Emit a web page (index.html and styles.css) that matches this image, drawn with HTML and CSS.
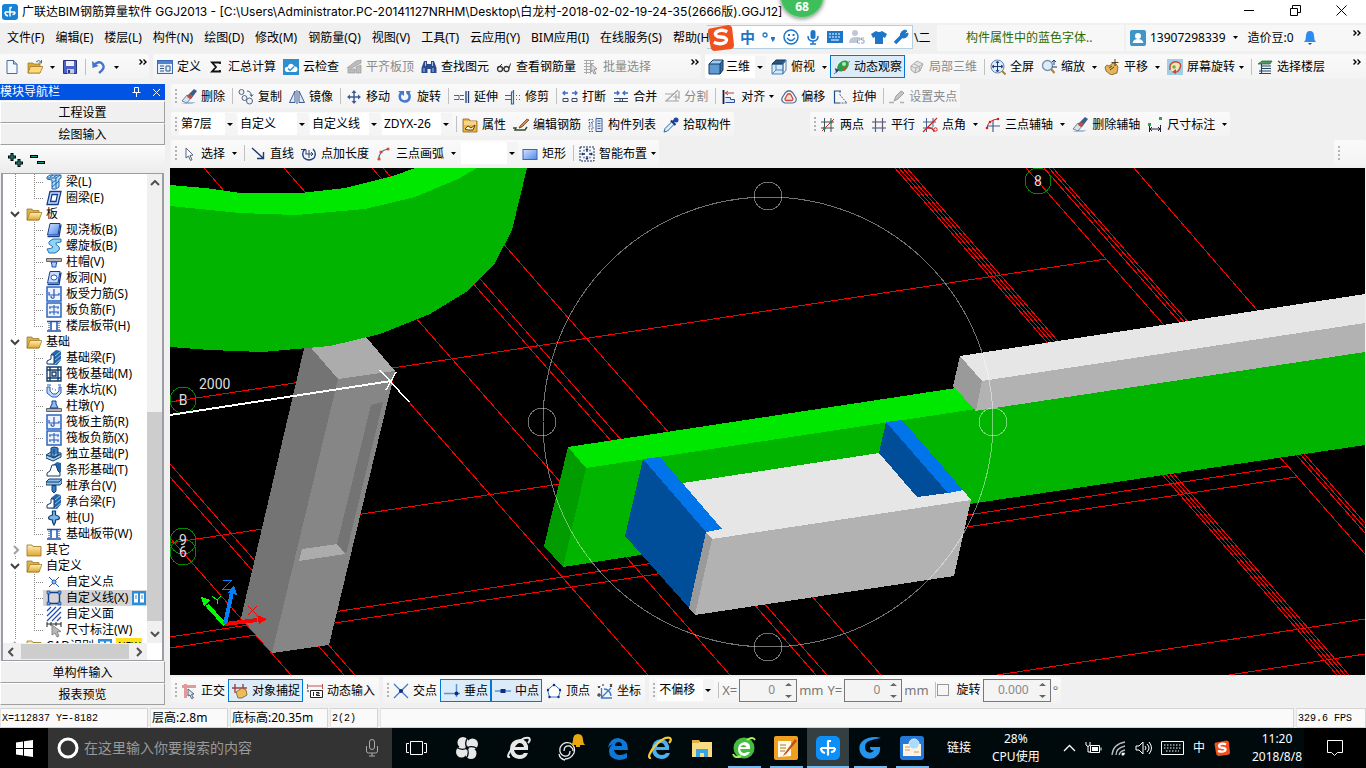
FILE: index.html
```
<!DOCTYPE html>
<html lang="zh-CN">
<head>
  <meta charset="UTF-8" />
  <meta name="viewport" content="width=device-width, initial-scale=1.0" />
  <title>广联达BIM钢筋算量软件 GGJ2013</title>
  <link rel="stylesheet" href="styles.css">
</head>
<body>
  <!-- Icon sprite -->
  <svg class="sprite" aria-hidden="true">
    <linearGradient id="g-blue" x1="0" y1="0" x2="1" y2="1"><stop offset="0" stop-color="#d4e4ff"/><stop offset="1" stop-color="#4f86e8"/></linearGradient>
    <linearGradient id="g-fold" x1="0" y1="0" x2="0" y2="1"><stop offset="0" stop-color="#fff0b8"/><stop offset="1" stop-color="#e0a52c"/></linearGradient>
    <symbol id="i-logo" viewBox="0 0 16 16"><rect width="16" height="16" rx="3" fill="#1583d6"/><path d="M8 3v9.500M8 3.500h2M3 8h10M3 8q0 3.500 3 4M13 8q0 2.500-2.500 2.500" fill="none" stroke="#fff" stroke-width="1.500"/></symbol>
    <symbol id="i-arrow" viewBox="0 0 5 3"><path d="M0 0h5L2.500 3z" fill="#000"/></symbol>
    <symbol id="i-more" viewBox="0 0 8 6"><path d="M.5.5L3 3 .5 5.500M4.500.5L7 3 4.500 5.500" fill="none" stroke="#000" stroke-width="1.400"/></symbol>
    <symbol id="i-new" viewBox="0 0 16 16"><path d="M3 1.500h6.500L13 5v9.500H3z" fill="#f4f8ff" stroke="#4a6a9a"/><path d="M9.500 1.500V5H13" fill="#b8cce8" stroke="#4a6a9a"/></symbol>
    <symbol id="i-open" viewBox="0 0 16 16"><path d="M1 4h5l1 1h6v9H1z" fill="#dca83c" stroke="#98701c" stroke-width=".7"/><path d="M3.500 7.500H16L13 14H1z" fill="#ffd97a" stroke="#98701c" stroke-width=".7"/><path d="M9 3q3-3 5 0M14.500 1v3h-3" fill="none" stroke="#4a6a88"/></symbol>
    <symbol id="i-save" viewBox="0 0 16 16"><path d="M1.500 1.500h13v13h-13z" fill="#4c63c8" stroke="#26327e"/><path d="M4 2h8v5H4z" fill="#eef"/><path d="M5 10h7v4.500H5z" fill="#c8cce0"/><path d="M6 11h2v3H6z" fill="#26327e"/></symbol>
    <symbol id="i-undo" viewBox="0 0 16 16"><path d="M3 6q5-5 8.500-1T8 14" fill="none" stroke="#4674cc" stroke-width="2.400"/><path d="M1 2l.500 7 6-2z" fill="#4674cc"/></symbol>
    <symbol id="i-define" viewBox="0 0 16 16"><rect x=".5" y="1.500" width="15" height="13" fill="#e4efff" stroke="#3b68b4"/><path d="M1 2h14v3H1z" fill="#4f83cc"/><path d="M3 7h4M3 9.500h4M3 12h4M9 7h4v5H9z" fill="none" stroke="#35547f"/></symbol>
    <symbol id="i-sigma" viewBox="0 0 16 16"><path d="M12 5V3.500H4L8 8l-4 4.500h8V11" fill="none" stroke="#111" stroke-width="1.800"/></symbol>
    <symbol id="i-cloud" viewBox="0 0 16 16"><rect width="16" height="16" fill="#2c8fd0"/><path d="M4 13q-3-1-2-4 1-1.500 2.500-1Q6 4 9 5q2 .5 2 2.500 3-.5 3.500 2T12.500 13z" fill="#fff"/><path d="M5 9.500l2 2 4-4" fill="none" stroke="#2c8fd0" stroke-width="1.300"/></symbol>
    <symbol id="i-align-top" viewBox="0 0 16 16"><path d="M1 9l9-7 5-1v3L6 9zM2 10h7v4H2zM10 8l5-2v8h-5z" fill="#bcbcbc" stroke="#9a9a9a" stroke-width=".7"/></symbol>
    <symbol id="i-binoc" viewBox="0 0 16 16"><path d="M3 2h3v3h4V2h3l2.500 7v5H9.500v-4h-3v4H.5V9z" fill="#2d4a8c"/><path d="M3 9v4M12 9v4M4.500 3v4M11.500 3v4" stroke="#a8c4f4"/></symbol>
    <symbol id="i-glasses" viewBox="0 0 16 16"><circle cx="4" cy="10" r="2.500" fill="none" stroke="#333" stroke-width="1.300"/><circle cx="10.500" cy="10" r="2.500" fill="none" stroke="#333" stroke-width="1.300"/><path d="M6.500 9.500h1.500M2 9l4-4M13 9.500l1.500-5" stroke="#333" fill="none"/></symbol>
    <symbol id="i-batch" viewBox="0 0 16 16"><path d="M1 1.500h10M1 4.500h10M1 7.500h8M1 10.500h6M1 13.500h6M3.500 1v14M7.500 1v14" stroke="#aaa" fill="none"/><path d="M8 5l6 5-3 .5 2 4-2 .5-1.500-4L8 13z" fill="#ddd" stroke="#999"/></symbol>
    <symbol id="i-cube" viewBox="0 0 16 16"><path d="M1 5l4-4h10l-3 4z" fill="#a6cdf0"/><path d="M1 5h11v10H1z" fill="#5f9bd2"/><path d="M12 5l3-4v10l-3 4z" fill="#356fa8"/><path d="M1 5l4-4h10v10l-3 4H1zM1 5h11v10M12 5l3-4" fill="none" stroke="#173a60"/></symbol>
    <symbol id="i-topview" viewBox="0 0 16 16"><path d="M1 5h11v10H1z" fill="#d4e9fb" stroke="#4f83b4"/><path d="M1 5l4-4h10l-3 4z" fill="#2d5680" stroke="#173a60"/><path d="M12 5l3-4v10l-3 4zM5 6v5l-4 4M5 11h7" fill="none" stroke="#4f83b4"/></symbol>
    <symbol id="i-orbit" viewBox="0 0 16 16"><path d="M0 15L16 2" stroke="#777"/><ellipse cx="9" cy="7" rx="6.500" ry="4.500" transform="rotate(-40 9 7)" fill="#2d9c48"/><circle cx="10" cy="5" r="2" fill="#a4f0a8"/><path d="M1 9l4 2-3 3z" fill="#283c80"/><path d="M8 11l5-4-2 5z" fill="#d04830"/></symbol>
    <symbol id="i-part3d" viewBox="0 0 16 16"><path d="M2 7l6-5 6 3-3 7-5 2-4-3zM2 7l5 2 7-4M7 9l-1 5M5 5l6 3-1 4" fill="#e2e2e2" stroke="#aaa"/></symbol>
    <symbol id="i-full" viewBox="0 0 16 16"><circle cx="7.500" cy="7.500" r="6.500" fill="#e0edfa" stroke="#6484ac"/><path d="M7.500 2.500v10M2.500 7.500h10M6 4l1.500-2L9 4M6 11l1.500 2L9 11M4 6L2 7.500 4 9M11 6l2 1.500L11 9" fill="none" stroke="#1c3c74"/><path d="M12 12l3.500 3.500" stroke="#b08030" stroke-width="2"/></symbol>
    <symbol id="i-zoom" viewBox="0 0 16 16"><circle cx="6.500" cy="6.500" r="5" fill="#dcecfa" stroke="#7890ac" stroke-width="1.300"/><path d="M10 10l3.500 4" stroke="#b08030" stroke-width="2"/><path d="M13 1v5M11 3l2-2 2 2M11 8h5" fill="none" stroke="#1c3c74"/></symbol>
    <symbol id="i-pan" viewBox="0 0 16 16"><path d="M1 8l2-2 2 1 4-3 3 1 2 3-1 6-6 2-5-4z" fill="#e4b458" stroke="#7a5820" stroke-width=".8"/><path d="M11 0v7M7.500 3.500h7M5 9l3-2M6 11l4-3" stroke="#54431c"/></symbol>
    <symbol id="i-rotscr" viewBox="0 0 16 16"><rect width="16" height="16" fill="#9cd0e8"/><path d="M3 11V7q2-5 7-4t3 6-6 4" fill="#f0e8bc" stroke="#d04438" stroke-width="1.500"/><path d="M5 13l4-3v5z" fill="#d04438"/><circle cx="7" cy="8" r="1.800" fill="#70b040"/></symbol>
    <symbol id="i-floors" viewBox="0 0 16 16"><path d="M1 5l4-3h10l-2 3z" fill="#4c9c60" stroke="#205830" stroke-width=".7"/><path d="M4 7h10M4 9.500h10M2 12h12M2 14.500h12M4.500 5v10" stroke="#24486c" stroke-width="1.200"/></symbol>
    <symbol id="i-erase" viewBox="0 0 16 16"><path d="M0 14.500h11l4-1H7z" fill="#5a8cc4"/><path d="M1 12l5-6 4 3-4 5z" fill="#d8e4f0" stroke="#506c90" stroke-width=".8"/><path d="M6 7l7-7 3 2-6 8z" fill="#3c5c8c"/><path d="M6 8l3-3 3 2-3 3z" fill="#c84c3c"/></symbol>
    <symbol id="i-copy" viewBox="0 0 16 16"><g fill="#eef2f8" stroke="#54647c"><circle cx="3.500" cy="3" r="2.500"/><circle cx="6.500" cy="9" r="2.500"/><circle cx="11.500" cy="12" r="3"/></g><path d="M9 2q4 0 4.500 5M12 5.500l1.500 2 1.500-2" fill="none" stroke="#345c90"/></symbol>
    <symbol id="i-mirror" viewBox="0 0 16 16"><path d="M6 2v11.500H.5zM10 2v11.500h5.500z" fill="#dfe8f8" stroke="#3a5a90"/><path d="M8 1v14" stroke="#3a5a90"/></symbol>
    <symbol id="i-move" viewBox="0 0 16 16"><path d="M8 2v12M2 8h12" stroke="#3c5c94" stroke-width="1.500"/><path d="M5.500 4L8 1l2.500 3zM5.500 12L8 15l2.500-3zM4 5.500L1 8l3 2.500zM12 5.500L15 8l-3 2.500z" fill="#3c5c94"/></symbol>
    <symbol id="i-rotate" viewBox="0 0 16 16"><path d="M4 4q-2.500 4 0 7 4 3 7.500 0 2.500-4-.5-7.500" fill="none" stroke="#4478cc" stroke-width="2.500"/><path d="M1 2h6v5zM9 2h5l-4 4z" fill="#4478cc"/></symbol>
    <symbol id="i-extend" viewBox="0 0 16 16"><path d="M0 6.500h5v4H0M6 6.500h4M6 10.500h4" fill="none" stroke="#44649c"/><path d="M12 2v12M14.500 2v12" stroke="#1c3c74" stroke-width="1.300"/></symbol>
    <symbol id="i-trim" viewBox="0 0 16 16"><path d="M0 6.500h6M0 10.500h6M11 6.500h1M14 6.500h1M11 10.500h1M14 10.500h1M6.500 3h2v12h-2zM8.500 1v14" fill="none" stroke="#34689c" stroke-width="1.200"/></symbol>
    <symbol id="i-break" viewBox="0 0 16 16"><path d="M1 4h5M10 4h5M3 2L1 4l2 2M13 2l2 2-2 2" fill="none" stroke="#3c6cc4" stroke-width="1.300"/><path d="M1 9.500h5v3H1zM10 9.500h5v3h-5z" fill="none" stroke="#34486c"/></symbol>
    <symbol id="i-merge" viewBox="0 0 16 16"><path d="M1 4h5M10 4h5M4 2l2 2-2 2M12 2l-2 2 2 2" fill="none" stroke="#3c6cc4" stroke-width="1.300"/><path d="M1 9.500h14M1 12.500h14M7 9.500v3M9.500 9.500v3" fill="none" stroke="#34486c"/></symbol>
    <symbol id="i-split" viewBox="0 0 16 16"><path d="M1 5h8M1 12h14M2 12l12-11M9 8h6M12 5v7M15 2v8" stroke="#a4a4a4" stroke-width="1.200" fill="none"/></symbol>
    <symbol id="i-align" viewBox="0 0 16 16"><path d="M2.500 1v14" stroke="#101c4c" stroke-width="1.800"/><path d="M4 4h9M7 2L4.500 4 7 6" stroke="#c03c2c" fill="none"/><path d="M4.500 8.500h5v2h4v3h-9" fill="#dce8fa" stroke="#2c4ca0"/></symbol>
    <symbol id="i-offset" viewBox="0 0 16 16"><path d="M4.500 3.500Q8 0 11.500 3.500L15 9q1 4-3 5H4Q0 13 1 9z" fill="none" stroke="#546c9c" stroke-width="1.200"/><path d="M6 6q2-2.500 4 0l2 4q0 1.500-1.500 1.500h-5Q4 11.500 4 10z" fill="#f4dcd8" stroke="#c84c3c" stroke-width="1.300"/></symbol>
    <symbol id="i-stretch" viewBox="0 0 16 16"><path d="M9 2H2.500v12H8" fill="none" stroke="#1c4c84" stroke-width="1.200"/><path d="M8 2v4l7 8H8" stroke="#44648c" stroke-dasharray="2 1" fill="none"/></symbol>
    <symbol id="i-grip" viewBox="0 0 16 16"><path d="M0 13.500h5M11 13.500h4" stroke="#b0b0b0" stroke-width="1.500"/><path d="M5 12l2-5 5-5 3 2-6 6z" fill="#c4c4c4" stroke="#a0a0a0"/></symbol>
    <symbol id="i-prop" viewBox="0 0 16 16"><path d="M1 2h6l1 2h7v11H1z" fill="#f0b440" stroke="#8c6420" stroke-width=".8"/><path d="M2 5h12M2 7h12" stroke="#fff4cc"/><path d="M3 12l3-3 3 2 4-3-2 5H6z" fill="#fffae8" stroke="#5c4010"/></symbol>
    <symbol id="i-rebar" viewBox="0 0 16 16"><path d="M0 11h3l-1 2h10l2-3" fill="none" stroke="#34482c" stroke-width="1.400"/><path d="M7 9l7-7 2 1-7 7-3 1z" fill="#d08c4c" stroke="#54341c" stroke-width=".7"/></symbol>
    <symbol id="i-list" viewBox="0 0 16 16"><path d="M1 2.500h4v3H1zM1 9h4v3H1zM1 14.500h4M1 7h4" fill="none" stroke="#44608c" stroke-dasharray="1.500 1"/><path d="M8 1.500h6v13H8z" fill="#dfe9fa" stroke="#3c5c90"/><path d="M9.500 4h3M9.500 6.500h3M9.500 9h3M9.500 11.500h3" stroke="#3c5c90"/></symbol>
    <symbol id="i-pick" viewBox="0 0 16 16"><path d="M1 15l1-3.500L9 4.500 11.500 7l-7 7z" fill="#dcecfc" stroke="#34689c"/><path d="M8 3.500L12.500 8M9.500 5.500L12 3" stroke="#1c3c84" stroke-width="2.200"/><circle cx="13" cy="3" r="2.500" fill="#1c48a4"/></symbol>
    <symbol id="i-two" viewBox="0 0 16 16"><path d="M1 5h13M1 11h13M4.500 1v14M11 1v14" stroke="#44505c"/><path d="M2 14L14 2" stroke="#c03030"/><circle cx="4.500" cy="11" r="1.500" fill="#28883c"/><circle cx="11" cy="5" r="1.500" fill="#28883c"/></symbol>
    <symbol id="i-para" viewBox="0 0 16 16"><path d="M1 5h14M1 11h14" stroke="#34507c" stroke-width="1.200"/><path d="M4.500 1v14M11.500 1v14" stroke="#6c5474" stroke-width="1.200"/></symbol>
    <symbol id="i-angle" viewBox="0 0 16 16"><path d="M1 5h13M1 11h10M4.500 1v14M11 1v9" stroke="#44608c"/><path d="M1 15L15 1M5 11q6-1 7 4" stroke="#d02020" fill="none" stroke-width="1.200"/><circle cx="13.500" cy="12.500" r="1.700" fill="none" stroke="#d02020"/></symbol>
    <symbol id="i-3axis" viewBox="0 0 16 16"><path d="M2 9h13M8 3v12" stroke="#44608c" stroke-width="1.200"/><path d="M2 12Q2 3 13 2" stroke="#d02020" fill="none"/><circle cx="2" cy="11" r="1.300" fill="#d02020"/><circle cx="5" cy="5" r="1.300" fill="#d02020"/><circle cx="13" cy="2" r="1.300" fill="#d02020"/></symbol>
    <symbol id="i-dim" viewBox="0 0 16 16"><path d="M2.500 8v7M13.500 8v7M3 12h10M5 10l-2 2 2 2M11 10l2 2-2 2" fill="none" stroke="#223"/><path d="M1 6h3v3H1zM12 0h3v3h-3z" fill="#2ca44c"/></symbol>
    <symbol id="i-cursor" viewBox="0 0 16 16"><path d="M5 2v10l2.500-2 2 4.500 1.500-.7-2-4.300 3-.500z" fill="#fff" stroke="#54647c"/></symbol>
    <symbol id="i-line" viewBox="0 0 16 16"><path d="M2 2l11 10M13.500 6v6.500H7" fill="none" stroke="#1c3c70" stroke-width="1.400"/></symbol>
    <symbol id="i-ptlen" viewBox="0 0 16 16"><path d="M4 3q-4 4-1 9 5 4 10 0 3-5-1-9" fill="none" stroke="#24447c" stroke-width="1.400"/><path d="M0 3.500h5V8M8 4v8M4.500 8h7M10 6l2 2-2 2" fill="none" stroke="#24447c"/></symbol>
    <symbol id="i-arc" viewBox="0 0 16 16"><path d="M3 14Q2 5 12 3" fill="none" stroke="#44608c" stroke-width="1.200"/><g fill="#d84c2c"><circle cx="3" cy="13" r="1.600"/><circle cx="5" cy="6" r="1.600"/><circle cx="12" cy="3" r="1.600"/></g></symbol>
    <symbol id="i-rect" viewBox="0 0 16 16"><rect x="1" y="3.500" width="14" height="10" fill="url(#g-blue)" stroke="#3c64b8"/></symbol>
    <symbol id="i-smart" viewBox="0 0 16 16"><rect x="1" y="1" width="14" height="14" fill="#f2f6ff" stroke="#1c2c54" stroke-dasharray="2 1"/><path d="M8 3v3M8 10v3M3 8h3M10 8h3M4.500 4.500h1M10.500 4.500h1M4.500 11.500h1M10.500 11.500h1M7 4l1-1 1 1M7 12l1 1 1-1M4 7L3 8l1 1M12 7l1 1-1 1" fill="none" stroke="#1c2c54" stroke-width="1.300"/></symbol>
    <symbol id="i-ortho" viewBox="0 0 16 16"><path d="M1 3.500h14M4.500 1v14" stroke="#e09a9a" stroke-width="3"/><path d="M7 6l6 5-2.500.5 2 3.500-2 .5-1.500-3.500L7 13z" fill="#dbe6f4" stroke="#54647c"/></symbol>
    <symbol id="i-snap" viewBox="0 0 16 16"><path d="M3 1v9M11 1v5M0 5h15" stroke="#a04040" stroke-width="1.400"/><path d="M4 9l6-4 4 2 1 5-5 3H6z" fill="#ecbc5c" stroke="#7c5820" stroke-width=".8"/></symbol>
    <symbol id="i-dyn" viewBox="0 0 16 16"><path d="M.5 1v5M15.500 1v5M1 3h14" stroke="#c05050" fill="none"/><path d="M3.500 7.500h12v7h-12z" fill="#fff" stroke="#222"/><path d="M6.500 9v4M9 9.500h3v1.500H9.500v1.500H13M0 8h2" fill="none" stroke="#222"/></symbol>
    <symbol id="i-cross" viewBox="0 0 16 16"><path d="M1 1l14 14M15 1L1 15" stroke="#3a78c8" stroke-width="1.200"/><circle cx="8" cy="8" r="2" fill="#102c80"/></symbol>
    <symbol id="i-perp" viewBox="0 0 16 16"><path d="M0 10.500h16M12.500 1v13" stroke="#5a94d8" stroke-width="1.500"/><circle cx="12.500" cy="10.500" r="2" fill="#102c80"/></symbol>
    <symbol id="i-mid" viewBox="0 0 16 16"><path d="M0 8h16" stroke="#5a94d8" stroke-width="1.500"/><path d="M5.500 6h5v4h-5z" fill="#102c80"/></symbol>
    <symbol id="i-vertex" viewBox="0 0 16 16"><path d="M8 1.500L14.500 7l-2 7h-9l-2-7z" fill="#fff" stroke="#3a78c8"/><g fill="#102c80"><circle cx="8" cy="2" r="1.200"/><circle cx="14" cy="7" r="1.200"/><circle cx="12.500" cy="14" r="1.200"/><circle cx="3.500" cy="14" r="1.200"/><circle cx="2" cy="7" r="1.200"/></g></symbol>
    <symbol id="i-coord" viewBox="0 0 16 16"><path d="M4.500 5v10H15M5 14l9-9M7 6q6 0 7 7" fill="none" stroke="#3a78c8" stroke-width="1.300"/><path d="M1 3l1 2 1-2M13 1l2 3M15 1l-2 3M5 2h2M1 11h2v2H1z" fill="none" stroke="#222"/></symbol>
    <symbol id="i-user" viewBox="0 0 16 16"><rect width="16" height="16" rx="2" fill="#3f94c8"/><circle cx="8" cy="6" r="3" fill="#fff"/><path d="M2.500 13q1-4 5.500-4t5.500 4z" fill="#fff"/></symbol>
    <symbol id="i-bell" viewBox="0 0 12 16"><path d="M6 1q4 0 4 5 0 4 2 6H0q2-2 2-6 0-5 4-5z" fill="#2c8cf0"/><path d="M4 13h4l-2 2z" fill="#174c94"/></symbol>
    <!-- tree icons -->
    <symbol id="t-open" viewBox="0 0 16 16"><path d="M1 3h5l1 1.500h6V14H1z" fill="#e0b048" stroke="#94701c" stroke-width=".7"/><path d="M4 6.500h12L13 14H1z" fill="url(#g-fold)" stroke="#94701c" stroke-width=".7"/></symbol>
    <symbol id="t-closed" viewBox="0 0 16 16"><path d="M1 3h5l1 1.500h8V14H1z" fill="url(#g-fold)" stroke="#94701c" stroke-width=".8"/></symbol>
    <symbol id="t-beam" viewBox="0 0 16 16"><path d="M1 3l3-2h11v3l-2 1v8l-3 2H6V6L1 5z" fill="#b8e0fa" stroke="#1c60a8"/><path d="M2 4h8l4-3M10 4v10M6 9l4-3M6 13l7-6M4 3l3-2M8 3l3-2" stroke="#1c60a8" fill="none"/></symbol>
    <symbol id="t-ring" viewBox="0 0 16 16"><path d="M4 1.500h11l-3 13H1z" fill="#cce0ff" stroke="#143c8c" stroke-width="1.300"/><path d="M6 4.500h5.500L10 11.500H4.500z" fill="#fff" stroke="#143c8c" stroke-width="1.300"/></symbol>
    <symbol id="t-slab" viewBox="0 0 16 16"><path d="M4 1.500h10l-2 11.500H1.500z" fill="url(#g-blue)" stroke="#143c8c"/><path d="M1.500 14.500H13l2-12" fill="none" stroke="#143c8c" stroke-width="1.400"/></symbol>
    <symbol id="t-spiral" viewBox="0 0 16 16"><path d="M15 1H7Q-1 5 6 8q3 2-5 3l2 4h6q8-4 2-8-4-2 4-3z" fill="#90d4f4" stroke="#2470b4"/></symbol>
    <symbol id="t-cap" viewBox="0 0 16 16"><path d="M.5 4.500h15v3H.5z" fill="#b4b4b4" stroke="#666"/><path d="M5 8h6l-1 3v2H6v-2z" fill="#a8d0ff" stroke="#1c4cb0"/></symbol>
    <symbol id="t-hole" viewBox="0 0 16 16"><path d="M4 1.500h10l-2 11.500H1.500z" fill="#c4dcff" stroke="#143c8c"/><path d="M1.500 14.500H13l2-12" fill="none" stroke="#143c8c" stroke-width="1.400"/><ellipse cx="8" cy="7.500" rx="3" ry="2.500" fill="#fff" stroke="#2458b8"/></symbol>
    <symbol id="t-force" viewBox="0 0 16 16"><path d="M1 1h14v14H1z" fill="#ecf3ff" stroke="#2c64c0" stroke-width="1.500"/><path d="M8 3v9M3 6v3h10V7M5 10q0 3 3 2" fill="none" stroke="#2458b8" stroke-width="1.200"/></symbol>
    <symbol id="t-neg" viewBox="0 0 16 16"><path d="M1 1h14v14H1z" fill="#ecf3ff" stroke="#2c64c0" stroke-width="1.500"/><path d="M8 3v10M3 5h10M3 10h10M4 5v2M12 5v2M4 10v2M12 10v2" fill="none" stroke="#2458b8"/></symbol>
    <symbol id="t-band" viewBox="0 0 16 16"><path d="M1 3.500h14M1 13h14M5 4v8M11 4v8" stroke="#1c50a8" stroke-width="1.500"/><path d="M3 5v7M13 5v7" stroke="#333" stroke-dasharray="1 1"/></symbol>
    <symbol id="t-fbeam" viewBox="0 0 16 16"><path d="M1 14v-3l4-2V4l5-4 5 1v9l-4 5z" fill="#2464a8"/><path d="M1 14v-3l4-2V5h3v9z" fill="#fff" stroke="#143c6c"/><path d="M9 6l6-5M9 10l6-5M9 14l6-5" stroke="#8cc4f0"/></symbol>
    <symbol id="t-raft" viewBox="0 0 16 16"><path d="M1 1h14v14H1zM1 4h14M1 12h14M4 1v14M12 1v14M6 6h4v4H6z" fill="none" stroke="#143c6c" stroke-width="1.400"/></symbol>
    <symbol id="t-pit" viewBox="0 0 16 16"><path d="M1 5h3v4l3 3h3l3-3V5h2v6l-4 4H6L1 11z" fill="#c0dcff" stroke="#2458b8"/><path d="M1 3h4M12 3h3M6 7h1M9 8h1" stroke="#2458b8"/></symbol>
    <symbol id="t-pier" viewBox="0 0 16 16"><path d="M.5 10.500h15v3H.5z" fill="#b4b4b4" stroke="#666"/><path d="M6 3h4v3l2 4H4l2-4z" fill="#8cbcf4" stroke="#143c8c"/></symbol>
    <symbol id="t-pad" viewBox="0 0 16 16"><path d="M0 9l5-3 10 1v4l-8 4-7-3z" fill="#a8d4f4" stroke="#143c6c"/><path d="M5 2l3-1 4 1v7l-4 2-3-2zM8 3v7M0 9l8 3 7-4" fill="#3c80c4" stroke="#143c6c"/></symbol>
    <symbol id="t-strip" viewBox="0 0 16 16"><path d="M7 3l4-3 4 1v9l-4 4z" fill="#2464a8"/><path d="M1 14v-3l3-2 2-6h4l2 6 2 2v3z" fill="#fff" stroke="#143c6c"/></symbol>
    <symbol id="t-pile-cap" viewBox="0 0 16 16"><path d="M0 4l3-3h13v4l-2 2H0z" fill="#8cc0ec" stroke="#143c6c"/><path d="M0 4h13l3-3" fill="none" stroke="#143c6c"/><path d="M6 7.500h4V13l-2 2-2-2z" fill="#3c80c4" stroke="#143c6c"/></symbol>
    <symbol id="t-pile" viewBox="0 0 16 16"><path d="M6.500 1h3v4q4 1 4 3 0 1.500-4 2v2L8 15l-1.500-3v-2q-4-.5-4-2 0-2 4-3z" fill="#78b4ec" stroke="#143c6c" stroke-width="1.200"/></symbol>
    <symbol id="t-point" viewBox="0 0 16 16"><path d="M3 3l10 10M13 3L3 13" stroke="#2458b8"/><circle cx="8" cy="8" r="2" fill="#8cc4f8" stroke="#2458b8"/></symbol>
    <symbol id="t-line" viewBox="0 0 16 16"><path d="M2.500 2.500h11v11h-11z" fill="none" stroke="#143c8c" stroke-width="1.400"/><path d="M1 1h3v3H1zM12 1h3v3h-3zM1 12h3v3H1zM12 12h3v3h-3z" fill="#5ca0ec" stroke="#143c8c" stroke-width=".6"/></symbol>
    <symbol id="t-area" viewBox="0 0 16 16"><path d="M1 5l4-4M1 10l9-9M1 15L15 1M6 15l9-9M11 15l4-4" stroke="#1c4cb8" stroke-width="1.200"/></symbol>
    <symbol id="t-dim" viewBox="0 0 16 16"><path d="M1 0v5M15 0v5M1 2h14M5 0v4M10 0v4" stroke="#222"/><path d="M6 3v10l3-2 2 4 2-1-2-4 4-.5z" fill="#b8b8b8" stroke="#888"/></symbol>
    <symbol id="t-doc" viewBox="0 0 14 14"><rect width="14" height="14" fill="#2c8cdc"/><path d="M2 2.500h4v9H2zM8 2.500h4v9H8z" fill="#fff"/><path d="M3 5h2M3 7h2M9 5h2M9 7h2" stroke="#2c8cdc"/></symbol>
  </svg>

  <div class="app">
    <header class="titlebar">
      <svg class="ic"><use href="#i-logo"/></svg>
      <h1>广联达BIM钢筋算量软件 GGJ2013 - [C:\Users\Administrator.PC-20141127NRHM\Desktop\白龙村-2018-02-02-19-24-35(2666版).GGJ12]</h1>
      <div class="win-buttons">
        <button aria-label="最小化"><svg width="11" height="11"><path d="M0 5.500h10" stroke="#000"/></svg></button>
        <button aria-label="还原"><svg width="11" height="11"><path d="M.5 3.500h7v7h-7zM2.500 3V.5h8v7H8" fill="none" stroke="#000"/></svg></button>
        <button aria-label="关闭"><svg width="11" height="11"><path d="M.5.5l10 10M10.500.5l-10 10" stroke="#000"/></svg></button>
      </div>
      <div class="speed-ball">68</div>
    </header>

    <div class="menu-row">
      <nav class="menu">
        <a href="#">文件(F)</a><a href="#">编辑(E)</a><a href="#">楼层(L)</a><a href="#">构件(N)</a><a href="#">绘图(D)</a><a href="#">修改(M)</a><a href="#">钢筋量(Q)</a><a href="#">视图(V)</a><a href="#">工具(T)</a><a href="#">云应用(Y)</a><a href="#">BIM应用(I)</a><a href="#">在线服务(S)</a><a href="#">帮助(H)</a>
      </nav>
      <span class="menu-tail">\二</span>
      <a class="tip" href="#">构件属性中的蓝色字体..</a>
      <div class="account">
        <svg class="ic"><use href="#i-user"/></svg>
        <button>13907298339<svg class="arr wide"><use href="#i-arrow"/></svg></button>
        <span>造价豆:0</span>
        <svg class="bell"><use href="#i-bell"/></svg>
        <svg class="more"><use href="#i-more"/></svg>
      </div>
      <div class="ime">
        <svg class="ime-logo" viewBox="0 0 28 28"><path d="M2 5l20-4q3 0 4 3l2 18q0 3-3 4L8 28q-3 0-4-3L1 8q0-2 1-3z" fill="#f0501c"/><path d="M21 8q-6-3-11 0-3 3 1 5l7 1q4 2 1 5-5 3-12 0" fill="none" stroke="#fff" stroke-width="3.500"/></svg>
        <b>中</b>
        <svg viewBox="0 0 16 16"><circle cx="4" cy="6" r="2" fill="none" stroke="#1e76c8" stroke-width="1.300"/><path d="M10 8h4q0 4-3 5 1-2-1-3z" fill="#1e76c8"/></svg>
        <svg viewBox="0 0 16 16"><circle cx="8" cy="8" r="7" fill="none" stroke="#1e76c8" stroke-width="1.500"/><path d="M4 9q4 5 8 0" fill="none" stroke="#1e76c8" stroke-width="1.300"/><path d="M5 5h2v2H5zM9.500 5h2v2h-2z" fill="#1e76c8"/></svg>
        <svg viewBox="0 0 16 16"><rect x="5.500" y="1" width="5" height="9" rx="2.500" fill="#1e76c8"/><path d="M3 7q0 5 5 5t5-5M8 12v3M5 15h6" fill="none" stroke="#1e76c8" stroke-width="1.500"/></svg>
        <svg viewBox="0 0 16 16"><path d="M0 2h16v12H0z" fill="#1e76c8"/><path d="M2 5h12M2 8h12" stroke="#fff" stroke-dasharray="2 1"/><path d="M4 11h8" stroke="#fff"/></svg>
        <svg viewBox="0 0 16 16"><circle cx="6" cy="4" r="3" fill="#c0c8d8"/><path d="M0 14q0-6 6-6 3 0 3 1v5z" fill="#c0c8d8"/><path d="M8 9h3v2H8.500v3H11M15 9h-2.500v2H15v3h-3" fill="none" stroke="#98a4bc"/></svg>
        <svg viewBox="0 0 16 16"><path d="M5 2q3 2 6 0l5 3-2 4-2-1v7H4V8L2 9 0 5z" fill="#1e76c8"/></svg>
        <svg viewBox="0 0 16 16"><path d="M2 14L9 7" stroke="#1e76c8" stroke-width="3.500"/><path d="M14 2l-3 3 1 0 3-1q0 5-5 5-3-1-2.500-4T12 1z" fill="#1e76c8" stroke="#1e76c8"/></svg>
      </div>
    </div>

    <div class="top-row">
      <div class="bar bar-file">
        <button aria-label="新建"><svg class="ic"><use href="#i-new"/></svg></button>
        <button aria-label="打开"><svg class="ic"><use href="#i-open"/></svg><svg class="arr wide"><use href="#i-arrow"/></svg></button>
        <button aria-label="保存"><svg class="ic"><use href="#i-save"/></svg></button>
        <i class="sep"></i>
        <button aria-label="撤销"><svg class="ic"><use href="#i-undo"/></svg><svg class="arr wide"><use href="#i-arrow"/></svg></button>
        <svg class="more"><use href="#i-more"/></svg>
      </div>
      <div class="bar bar-calc">
        <button><svg class="ic"><use href="#i-define"/></svg>定义</button>
        <button><svg class="ic"><use href="#i-sigma"/></svg>汇总计算</button>
        <button><svg class="ic"><use href="#i-cloud"/></svg>云检查</button>
        <button disabled><svg class="ic"><use href="#i-align-top"/></svg>平齐板顶</button>
        <button><svg class="ic"><use href="#i-binoc"/></svg>查找图元</button>
        <button><svg class="ic"><use href="#i-glasses"/></svg>查看钢筋量</button>
        <button disabled><svg class="ic"><use href="#i-batch"/></svg>批量选择</button>
        <svg class="more"><use href="#i-more"/></svg>
      </div>
      <div class="bar bar-view">
        <label class="combo"><svg class="ic"><use href="#i-cube"/></svg><select class="w-view" aria-label="视图"><option>三维</option></select></label>
        <button><svg class="ic"><use href="#i-topview"/></svg>俯视<svg class="arr wide"><use href="#i-arrow"/></svg></button>
        <button class="on"><svg class="ic"><use href="#i-orbit"/></svg>动态观察</button>
        <button disabled><svg class="ic"><use href="#i-part3d"/></svg>局部三维</button>
        <i class="sep"></i>
        <button><svg class="ic"><use href="#i-full"/></svg>全屏</button>
        <button><svg class="ic"><use href="#i-zoom"/></svg>缩放<svg class="arr wide"><use href="#i-arrow"/></svg></button>
        <button><svg class="ic"><use href="#i-pan"/></svg>平移<svg class="arr wide"><use href="#i-arrow"/></svg></button>
        <button><svg class="ic"><use href="#i-rotscr"/></svg>屏幕旋转<svg class="arr"><use href="#i-arrow"/></svg></button>
        <i class="sep"></i>
        <button><svg class="ic"><use href="#i-floors"/></svg>选择楼层</button>
        <svg class="more"><use href="#i-more"/></svg>
      </div>
    </div>

    <div class="work">
      <aside class="sidebar">
        <div class="side-title">模块导航栏
          <svg width="10" height="10"><path d="M2.500 5.500v-5h4v5M.5 5.500h8M4.500 6v4M6.500 1v4" fill="none" stroke="#fff"/></svg>
          <svg width="9" height="9"><path d="M1 1l7 7M8 1L1 8" stroke="#fff"/></svg>
        </div>
        <button class="nav-btn">工程设置</button>
        <button class="nav-btn">绘图输入</button>
        <div class="side-tools">
          <button aria-label="全部展开"><svg width="16" height="14"><path d="M0 4h8M4 0v8M7 10h8M11 6v8" stroke="#000" stroke-width="3"/><path d="M1 4h6M4 1v6M8 10h6M11 7v6" stroke="#0c9c94"/></svg></button>
          <button aria-label="全部折叠"><svg width="16" height="14"><path d="M0 3.500h8M7 9.500h8" stroke="#000" stroke-width="3"/><path d="M1 3.500h6M8 9.500h6" stroke="#0c9c94"/></svg></button>
        </div>
        <div class="tree-pane">
          <ul class="tree" id="tree">
            <!-- filled in by script.js -->
          </ul>
          <div class="vscroll"><svg width="10" height="6"><path d="M1 5l4-4 4 4" fill="none" stroke="#505050" stroke-width="2"/></svg><div class="vtrack"><div class="vthumb"></div></div><svg width="10" height="6"><path d="M1 1l4 4 4-4" fill="none" stroke="#505050" stroke-width="2"/></svg></div>
          <div class="hscroll"><svg width="6" height="10"><path d="M5 1L1 5l4 4" fill="none" stroke="#505050" stroke-width="2"/></svg><div class="htrack"><div class="hthumb"></div></div><svg width="6" height="10"><path d="M1 1l4 4-4 4" fill="none" stroke="#505050" stroke-width="2"/></svg></div>
        </div>
        <button class="nav-btn">单构件输入</button>
        <button class="nav-btn">报表预览</button>
      </aside>

      <main class="main">
        <div class="bars">
          <div class="bar grip">
            <button><svg class="ic"><use href="#i-erase"/></svg>删除</button>
            <i class="sep"></i>
            <button><svg class="ic"><use href="#i-copy"/></svg>复制</button>
            <button><svg class="ic"><use href="#i-mirror"/></svg>镜像</button>
            <i class="sep"></i>
            <button><svg class="ic"><use href="#i-move"/></svg>移动</button>
            <button><svg class="ic"><use href="#i-rotate"/></svg>旋转</button>
            <i class="sep"></i>
            <button><svg class="ic"><use href="#i-extend"/></svg>延伸</button>
            <button><svg class="ic"><use href="#i-trim"/></svg>修剪</button>
            <i class="sep"></i>
            <button><svg class="ic"><use href="#i-break"/></svg>打断</button>
            <button><svg class="ic"><use href="#i-merge"/></svg>合并</button>
            <button disabled><svg class="ic"><use href="#i-split"/></svg>分割</button>
            <i class="sep"></i>
            <button><svg class="ic"><use href="#i-align"/></svg>对齐<svg class="arr"><use href="#i-arrow"/></svg></button>
            <button><svg class="ic"><use href="#i-offset"/></svg>偏移</button>
            <button><svg class="ic"><use href="#i-stretch"/></svg>拉伸</button>
            <i class="sep"></i>
            <button disabled><svg class="ic"><use href="#i-grip"/></svg>设置夹点</button>
          </div>
        </div>
        <div class="bars">
          <div class="bar grip">
            <label class="combo"><select class="w-floor" aria-label="楼层"><option>第7层</option></select></label>
            <label class="combo"><select class="w-type" aria-label="构件类型"><option>自定义</option></select></label>
            <label class="combo"><select class="w-type" aria-label="构件"><option>自定义线</option></select></label>
            <label class="combo"><select class="w-type" aria-label="构件名称"><option>ZDYX-26</option></select></label>
            <i class="sep"></i>
            <button><svg class="ic"><use href="#i-prop"/></svg>属性</button>
            <button><svg class="ic"><use href="#i-rebar"/></svg>编辑钢筋</button>
            <button><svg class="ic"><use href="#i-list"/></svg>构件列表</button>
            <button><svg class="ic"><use href="#i-pick"/></svg>拾取构件</button>
          </div>
          <div class="bar grip bar-axis">
            <button><svg class="ic"><use href="#i-two"/></svg>两点</button>
            <button><svg class="ic"><use href="#i-para"/></svg>平行</button>
            <button><svg class="ic"><use href="#i-angle"/></svg>点角<svg class="arr wide"><use href="#i-arrow"/></svg></button>
            <button><svg class="ic"><use href="#i-3axis"/></svg>三点辅轴<svg class="arr wide"><use href="#i-arrow"/></svg></button>
            <button><svg class="ic"><use href="#i-erase"/></svg>删除辅轴</button>
            <button><svg class="ic"><use href="#i-dim"/></svg>尺寸标注<svg class="arr wide"><use href="#i-arrow"/></svg></button>
          </div>
        </div>
        <div class="bars tall">
          <div class="bar grip">
            <button><svg class="ic"><use href="#i-cursor"/></svg>选择<svg class="arr wide"><use href="#i-arrow"/></svg></button>
            <i class="sep"></i>
            <button><svg class="ic"><use href="#i-line"/></svg>直线</button>
            <button><svg class="ic"><use href="#i-ptlen"/></svg>点加长度</button>
            <button><svg class="ic"><use href="#i-arc"/></svg>三点画弧<svg class="arr wide"><use href="#i-arrow"/></svg></button>
            <label class="combo"><select class="w-floor" aria-label="参数"><option></option></select></label>
            <button><svg class="ic"><use href="#i-rect"/></svg>矩形</button>
            <i class="sep"></i>
            <button><svg class="ic"><use href="#i-smart"/></svg>智能布置<svg class="arr"><use href="#i-arrow"/></svg></button>
          </div>
          <div class="bar grip bar-stub"></div>
        </div>

        <div class="viewport">
          <svg viewBox="170 168 1195 507" preserveAspectRatio="xMidYMid slice" shape-rendering="crispEdges">
            <!-- axis grid -->
            <g stroke="#f00" fill="none">
              <path d="M170 402L1106 259M170 543L560 484M170 637L1288 466M170 648L1296 477M997 675L1365 619M1229 675L1365 654"/>
              <path d="M204 168L648 675M284 168L730 675M372 168L816 675M383 168L827 675M437 168L881 675"/>
              <path d="M170 464L355 675M170 477L344 675M170 538L291 675"/>
              <path d="M895 168L1337 675M899 168L1341 675M903 168L1345 675M907 168L1349 675"/>
              <path d="M1026 168L1365 554M1044 168L1365 533M1049 168L1365 528M1053 168L1365 523M1134 168L1257 310"/>
            </g>
            <g fill="none" stroke="#008c00"><circle cx="183" cy="400" r="13"/><circle cx="183" cy="541" r="13"/><circle cx="183" cy="552" r="13"/><circle cx="1038" cy="181" r="13"/></g>
            <g class="axis-no"><text x="183" y="405">B</text><text x="183" y="545">9</text><text x="183" y="557">6</text><text x="1038" y="186">8</text></g>
            <!-- column -->
            <path fill="#747474" d="M306 340L338 379 272 653 241 618z"/>
            <path fill="#868686" d="M338 379L395 371 329 645 272 653z"/>
            <path fill="#acacac" d="M306 342L366 337 395 371 338 379z"/>
            <path fill="#747474" d="M371 405L383 402 346 554 337 544z"/>
            <path fill="#acacac" d="M302 549L337 544 345 554 299 561z"/>
            <!-- ring beam -->
            <path fill="#00b400" d="M170 206L240 213 296 215 365 209 415 197 458 179 477 168H527L512 230 495 263 466 292 430 314 380 334 330 346 262 352 210 350 170 347z"/>
            <path fill="#00e800" d="M170 185L205 188 240 193H300L345 188 393 176 415 168H477L458 179 415 197 365 209 296 215 240 213 170 206z"/>
            <!-- wall beam -->
            <path fill="#009c00" d="M568 447L586 468 563 567 544 546z"/>
            <path fill="#00b400" d="M586 468L976 409 1365 352V445L976 503 563 567z"/>
            <path fill="#00e800" d="M568 447L956 388 976 409 586 468z"/>
            <path fill="#e6e6e6" d="M960 356L1365 294V323L982 381z"/>
            <path fill="#b2b2b2" d="M982 381L1365 323V352L975 411z"/>
            <path fill="#9a9a9a" d="M960 356L982 381 976 411 953 386z"/>
            <!-- sill box -->
            <path fill="#e6e6e6" d="M683 483L879 453 917 497 963 490 971 500 712 539 706 532z"/>
            <path fill="#b2b2b2" d="M712 539L971 500 954 576 695 615z"/>
            <path fill="#9a9a9a" d="M706 532L712 539 695 615 689 608z"/>
            <path fill="#004e9a" d="M643 459L706 532 689 608 625 536zM886 422L948 493 917 497 879 453z"/>
            <path fill="#0074e8" d="M643 459L660 457 722 529 706 532zM886 422L902 420 963 490 948 493z"/>
            <!-- dimension line -->
            <path d="M170 415L391 381" stroke="#fff" stroke-width="2"/>
            <path d="M380 370L409 402M396 372L386 390" stroke="#fff" stroke-width="1.500"/>
            <text class="dim-no" x="199" y="389">2000</text>
            <!-- orbit ring -->
            <g fill="none" stroke="#fff" stroke-opacity=".45"><circle cx="768" cy="422" r="225"/><circle cx="542" cy="422" r="14"/><circle cx="993" cy="422" r="14"/><circle cx="768" cy="196" r="14"/><circle cx="768" cy="647" r="14"/></g>
            <!-- ucs -->
            <path d="M225 625L207 605" stroke="#0f0" stroke-width="4"/><path d="M201 597l9 3-6 7z" fill="#0f0"/>
            <path d="M225 624L257 620" stroke="#f00" stroke-width="4"/><path d="M257 615l10 4-8 5z" fill="#f00"/>
            <path d="M225 624L232 592" stroke="#0080ff" stroke-width="4"/><path d="M228 593l6-8 3 10z" fill="#0080ff"/>
            <path d="M223 580h9l-9 9h9" stroke="#0080ff" fill="none"/><path d="M212 596l5 4v4M221 596l-4 4" stroke="#0f0" fill="none"/><path d="M248 606l9 9M257 606l-9 9" stroke="#f00"/>
          </svg>
        </div>

        <div class="bars snap-row">
          <div class="bar grip bar-snap">
            <button><svg class="ic"><use href="#i-ortho"/></svg>正交</button>
            <button class="on"><svg class="ic"><use href="#i-snap"/></svg>对象捕捉</button>
            <button><svg class="ic"><use href="#i-dyn"/></svg>动态输入</button>
          </div>
          <div class="bar grip bar-snap">
            <button><svg class="ic"><use href="#i-cross"/></svg>交点</button>
            <button class="on"><svg class="ic"><use href="#i-perp"/></svg>垂点</button>
            <button class="on"><svg class="ic"><use href="#i-mid"/></svg>中点</button>
            <button><svg class="ic"><use href="#i-vertex"/></svg>顶点</button>
            <button><svg class="ic"><use href="#i-coord"/></svg>坐标</button>
          </div>
          <div class="bar grip bar-snap">
            <label class="combo"><select class="w-floor" aria-label="偏移方式"><option>不偏移</option></select></label>
            <i class="sep"></i>
            <label class="off" for="off-x">X=</label>
            <span class="spin"><input id="off-x" type="text" value="0" disabled><svg width="7" height="15"><path d="M0 3h7L3.500 0zM0 12h7l-3.500 3z" fill="#666"/></svg></span>
            <span class="off">mm</span>
            <label class="off" for="off-y">Y=</label>
            <span class="spin"><input id="off-y" type="text" value="0" disabled><svg width="7" height="15"><path d="M0 3h7L3.500 0zM0 12h7l-3.500 3z" fill="#666"/></svg></span>
            <span class="off">mm</span>
            <i class="sep"></i>
            <label class="rot"><input type="checkbox">旋转</label>
            <span class="spin spin-rot"><input type="text" value="0.000" aria-label="旋转角度" disabled><svg width="7" height="15"><path d="M0 3h7L3.500 0zM0 12h7l-3.500 3z" fill="#666"/></svg></span>
            <span class="off">°</span>
          </div>
        </div>
      </main>
    </div>

    <footer class="status">
      <span class="mono s-pos">X=112837 Y=-8182</span>
      <span class="s-h">层高:2.8m</span>
      <span class="s-base">底标高:20.35m</span>
      <span class="mono s-sel">2(2)</span>
      <span class="s-msg"></span>
      <span class="mono s-fps">329.6 FPS</span>
    </footer>

    <div class="taskbar">
      <button class="start" aria-label="开始"><svg width="17" height="17"><path d="M0 2.500L7 1.500V8H0zM8 1.300L17 0v8H8zM0 9h7v6.500l-7-1zM8 9h9v8l-9-1.300z" fill="#fff"/></svg></button>
      <label class="search"><svg width="22" height="22"><circle cx="11" cy="11" r="9" fill="none" stroke="#fff" stroke-width="3"/></svg><input type="text" placeholder="在这里输入你要搜索的内容"><svg width="12" height="18"><rect x="3.500" y=".5" width="5" height="10" rx="2.500" fill="none" stroke="#aaa"/><path d="M.5 7v5q0 2 2 2h7q2 0 2-2V7M6 14v3M3 17h6" fill="none" stroke="#aaa"/></svg></label>
      <button class="tv" aria-label="任务视图"><svg width="21" height="14"><path d="M4.500.5h12v13h-12zM3 2.500H.5v9H3M18 2.500h2.500v9H18" fill="none" stroke="#fff"/></svg></button>
      <div class="apps">
        <button class="wide-app" aria-label="风扇"><svg viewBox="0 0 24 24"><g fill="#e8e8e8"><circle cx="8" cy="6.500" r="5.500"/><circle cx="17.500" cy="8" r="5.500"/><circle cx="16" cy="17.500" r="5.500"/><circle cx="6.500" cy="16" r="5.500"/></g><path d="M12 12Q9 7 13 1M12 12q5-3 11 1M12 12q3 5-1 11M12 12q-5 3-11-1" fill="none" stroke="#000a0c" stroke-width="1.300"/></svg></button>
        <button class="wide-app" aria-label="浏览器"><svg viewBox="0 0 24 24"><path d="M21 14H7q1 5 6 5 3 0 4-2h4q-2 6-9 6-9-1-9-10T13 3q9 1 8 11zM8 11h9q-1-4-4.500-4T8 11z" fill="#e8e8e8" fill-rule="evenodd"/><path d="M3 21Q-2 22 6 11 16 0 22 2q2 2-1 5" fill="none" stroke="#e8e8e8" stroke-width="2"/></svg></button>
        <button class="wide-app" aria-label="提醒"><svg class="alert" viewBox="0 0 28 28"><path d="M13 17q0 6-6 5-5-2-4-8 3-7 10-5 6 3 4 10-3 6-9 6M7 17q0-6 6-5 3 2 3 5M2 20q1 5 6 6" fill="none" stroke="#eee" stroke-width="1.300"/><path d="M21 0q5 0 5 6 0 3 2 5H14q2-2 2-5 0-6 5-6zM19 11h4v2h-4z" fill="#e8a810"/></svg></button>
        <button aria-label="Edge"><svg viewBox="0 0 24 24"><path d="M22 14H8q1 5 6 5 4 0 7-2v5q-4 2-8 2-10-1-10-9 0-4 4-7-3 1-5 4Q4 2 12 2q10 1 10 12zM9 10h7q0-4-3.500-4T9 10z" fill="#0c78d8" fill-rule="evenodd"/></svg></button>
        <button aria-label="IE"><svg viewBox="0 0 24 24"><path d="M21 14H8q1 5 6 5 3 0 4-2h4q-2 6-9 6-9-1-9-10T13 3q9 1 8 11zM9 11h8q-1-4-4-4t-4 4z" fill="#4cb0f0" fill-rule="evenodd"/><path d="M3 22Q-2 22 6 11 16 0 22 2q2 2-1 5" fill="none" stroke="#f8c830" stroke-width="2.200"/></svg></button>
        <button aria-label="资源管理器"><svg viewBox="0 0 24 24"><path d="M2 4h7l1 2h12v15H2z" fill="#f8dc84"/><path d="M2 4h7v3H2z" fill="#e0b048"/><path d="M6 21v-8h12v8h-4v-4h-4v4z" fill="#38a4e0"/></svg></button>
        <button class="run" aria-label="安全浏览器"><svg viewBox="0 0 24 24"><circle cx="12" cy="12" r="10.500" fill="#44bc3c"/><path d="M18 13H8q1 4 4 4 2 0 3-1h3q-2 4-6 4-6-1-6-7t7-7q6 1 5 7zM8.500 11h6q-1-2-3-2t-3 2z" fill="#fff" fill-rule="evenodd"/><path d="M1 18Q3 23 9 20M15 4q6-4 8 0" stroke="#b0f060" fill="none" stroke-width="2"/></svg></button>
        <button class="run" aria-label="记事"><svg viewBox="0 0 24 24"><rect width="24" height="24" rx="2" fill="#f0a020"/><path d="M4 5h13v15l-13 1z" fill="#fffbe8"/><path d="M6 9h6M6 12h6M6 15h5" stroke="#a87838"/><path d="M10 18L21 3l2 2-11 13-3 2z" fill="#c84c18"/></svg></button>
        <button class="run active" aria-label="钢筋算量"><svg viewBox="0 0 24 24"><rect width="24" height="24" rx="5" fill="#0c90f8"/><path d="M12 4.500v15M12 5h3M5 12h14M5 12q0 4 4 5M19 12q0 4-4 4" fill="none" stroke="#fff" stroke-width="2.200"/></svg></button>
        <button class="run" aria-label="广联达"><svg viewBox="0 0 24 24"><path d="M23 2Q17 0 10 2-1 6 2 16q4 9 14 6 7-4 6-11H12q0 4 4 3-3 5-8 1-3-7 3-10 5-2 12-3z" fill="#2494ec"/></svg></button>
        <button class="run" aria-label="查询"><svg viewBox="0 0 24 24"><rect width="24" height="24" rx="3" fill="#2478d8"/><path d="M3 8h9v12H3zM12 8h9v12h-9z" fill="#fff4e0"/><circle cx="14" cy="8" r="5" fill="#a8dcfa" stroke="#eee"/><path d="M5 11h5M5 14h5M14 16h5" stroke="#c89860"/></svg></button>
      </div>
      <span class="link">链接</span>
      <div class="cpu">28%<br>CPU使用</div>
      <div class="tray">
        <svg width="13" height="8"><path d="M1 7l5.500-5.500L12 7" fill="none" stroke="#fff" stroke-width="1.300"/></svg>
        <svg width="17" height="14"><path d="M5.500 4.500h9v7h-9zM16 6.500v3" fill="none" stroke="#fff"/><path d="M7 6h6v4H7z" fill="#fff"/><path d="M1 1v3q2 3 4 0V1M3 5v6h3" fill="none" stroke="#fff"/></svg>
        <svg width="15" height="15"><path d="M1 14Q2 3 14 1M5 14q0-7 9-9M8 14q1-4 6-5M11 14l3-2" fill="none" stroke="#bbb" stroke-width="1.300"/><circle cx="12" cy="13" r="1.500" fill="#fff"/></svg>
        <svg width="17" height="14"><path d="M1 5h3l4-4v12L4 9H1zM10 5q2 2 0 4M12 3q4 4 0 8M14 1q5 6 0 12" fill="none" stroke="#fff"/></svg>
        <svg width="23" height="14"><path d="M.5.5h22v13H.5z" fill="none" stroke="#fff"/><path d="M3 4h17M3 7h17M5 10h13" stroke="#fff" stroke-dasharray="1.500 1.500"/></svg>
        <span>中</span>
        <svg width="16" height="16" viewBox="0 0 28 28"><path d="M2 5l20-4q3 0 4 3l2 18q0 3-3 4L8 28q-3 0-4-3L1 8q0-2 1-3z" fill="#f0501c"/><path d="M21 8q-6-3-11 0-3 3 1 5l7 1q4 2 1 5-5 3-12 0" fill="none" stroke="#fff" stroke-width="4"/></svg>
      </div>
      <div class="clock">11:20<br>2018/8/8</div>
      <button class="notice" aria-label="操作中心"><svg width="16" height="17"><path d="M.5.5h15v12h-5l-3 3-3-3h-4z" fill="none" stroke="#fff"/></svg></button>
    </div>
  </div>
  <script src="script.js"></script>
</body>
</html>
```
FILE: styles.css
```
* {
  margin: 0;
  padding: 0;
  box-sizing: border-box;
}

body {
  font-family: "Noto Sans", "Noto Sans CJK SC", sans-serif;
  font-size: 12px;
  line-height: 16px;
  color: #000;
  background: #f0f0f0;
  overflow: hidden;
}

button,
input,
select {
  font: inherit;
  color: inherit;
  border: 0;
  background: none;
}

a {
  color: inherit;
  text-decoration: none;
}

svg {
  flex: none;
}

.sprite {
  position: absolute;
  width: 0;
  height: 0;
}

.app {
  display: flex;
  flex-direction: column;
  height: 100vh;
}

.ic {
  width: 16px;
  height: 16px;
}

.arr {
  width: 5px;
  height: 3px;
}

.arr.wide {
  margin-left: 3px;
}

.more {
  width: 8px;
  height: 6px;
}

/* Title bar */
.titlebar {
  position: relative;
  display: flex;
  align-items: center;
  height: 23px;
  padding-left: 2px;
  background: #fff;
}

.titlebar h1 {
  flex: 1;
  margin-left: 4px;
  font-family: Inter, "Noto Sans CJK SC", sans-serif;
  font-size: 12px;
  font-weight: 400;
  white-space: nowrap;
}

.win-buttons {
  display: flex;
  margin-right: 2px;
}

.win-buttons button {
  width: 46px;
  height: 20px;
}

.speed-ball {
  position: absolute;
  left: 780px;
  top: -26px;
  width: 44px;
  height: 44px;
  padding-top: 24px;
  border-radius: 50%;
  background: #3fbe5c;
  border: 1px solid #8bd89b;
  box-shadow: 0 1px 4px #888;
  color: #fff;
  font-weight: 700;
  text-align: center;
}

/* Menu */
.menu-row {
  position: relative;
  display: flex;
  align-items: center;
  height: 28px;
  padding-top: 1px;
  white-space: nowrap;
}

.menu {
  display: flex;
  flex: 0 0 914px;
  gap: 11px;
  padding-left: 7px;
}

.menu-tail {
  flex: 0 0 23px;
}

.tip {
  flex: 0 0 187px;
  padding: 5px 0 5px 29px;
  margin-right: 2px;
  color: #2d6a00;
  background: #f7f7f7;
}

.account {
  display: flex;
  flex: 1;
  align-items: center;
  gap: 4px;
  padding: 5px 5px 5px 4px;
  background: #f7f7f7;
}

.account button {
  display: flex;
  align-items: center;
  gap: 4px;
  margin-right: 6px;
}

.account .bell {
  width: 12px;
  height: 16px;
  margin-left: 6px;
}

.account .more,
.bar .more {
  align-self: flex-start;
  margin-left: auto;
}

.ime {
  position: absolute;
  left: 707px;
  top: 2px;
  display: flex;
  align-items: center;
  gap: 6px;
  width: 206px;
  height: 24px;
  padding-right: 3px;
  background: linear-gradient(90deg, transparent 20px, #fff 20px);
  border: 1px solid #b4cfe0;
  border-left: 0;
}

.ime svg {
  width: 16px;
  height: 16px;
}

.ime .ime-logo {
  width: 27px;
  height: 27px;
}

.ime b {
  color: #1e76c8;
  font-size: 15px;
}

/* Toolbars */
.top-row {
  display: flex;
  gap: 4px;
  height: 25px;
  margin: 3px 0 5px;
}

.bar {
  display: flex;
  align-items: center;
  border-radius: 2px;
  background: linear-gradient(#fafafa, #f3f3f3);
  white-space: nowrap;
}

.bar button {
  display: flex;
  align-items: center;
  gap: 4px;
  height: 23px;
  padding: 1px 3px 0 4px;
}

.bar button:disabled {
  color: #8a8a8a;
}

.bar button.on {
  background: #dcebf8;
  box-shadow: inset 0 0 0 1px #0078d7;
}

.bar .more {
  margin-top: 5px;
  margin-right: 2px;
}

.bar-file {
  flex: 0 0 149px;
}

.bar-calc {
  flex: 0 0 548px;
}

.bar-view {
  flex: 1;
}

.bar-view .more {
  margin-right: 5px;
}

.sep {
  width: 1px;
  height: 16px;
  margin: 0 1px 0 4px;
  background: #c0c0c0;
}

.grip::before {
  content: "";
  width: 2px;
  height: 14px;
  margin: 0 0 0 4px;
  background: repeating-linear-gradient(#b4b4b4 0 2px, transparent 2px 4px);
}

.combo {
  position: relative;
  display: flex;
  align-items: center;
  height: 22px;
  margin-left: 2px;
  background: #fff;
}

.combo::after {
  content: "";
  position: absolute;
  right: 3px;
  top: 10px;
  border: 3px solid transparent;
  border-top-color: #000;
  border-bottom: 0;
  pointer-events: none;
}

.combo select {
  height: 22px;
  padding-left: 2px;
  appearance: none;
  background: linear-gradient(90deg, transparent calc(100% - 11px), #f4f4f4 calc(100% - 11px));
}

.bar-view .combo {
  margin: 0 1px 0 0;
  padding-left: 3px;
}

.w-view {
  width: 42px;
}

.w-floor {
  width: 57px;
}

.w-type {
  width: 70px;
}

/* Workspace */
.work {
  display: flex;
  flex: 1;
  gap: 4px;
  min-height: 0;
}

.sidebar {
  display: flex;
  flex-direction: column;
  flex: 0 0 166px;
  padding: 0 1px 3px 0;
}

.side-title {
  display: flex;
  align-items: center;
  gap: 10px;
  height: 16px;
  margin-bottom: 1px;
  padding-right: 4px;
  color: #fff;
  background: #0054e3;
}

.side-title svg:first-of-type {
  margin-left: auto;
}

.nav-btn {
  flex: none;
  height: 22px;
  padding-top: 1px;
  border: 1px solid #a0a0a0;
  border-top-color: #fff;
  border-left-color: #fff;
  background: #f0f0f0;
}

.side-tools {
  display: flex;
  gap: 4px;
  height: 28px;
  padding: 8px 7px 4px;
  background: linear-gradient(#fcfcfc, #ececec);
}

.side-tools button {
  width: 18px;
}

.tree-pane {
  display: grid;
  grid-template: 1fr 17px / 1fr 15px;
  flex: 1;
  min-height: 0;
  margin: 0 1px;
  border: 1px solid #9a9ea4;
  border-width: 1px 2px;
  background: #fff;
}

.tree {
  min-height: 0;
  overflow: hidden;
  list-style: none;
}

.tree li {
  height: 16px;
  --v: repeating-linear-gradient(#888 0 1px, transparent 1px 2px);
  --h: repeating-linear-gradient(90deg, #888 0 1px, transparent 1px 2px);
  background: var(--v) 12px 0 / 1px 100% no-repeat;
}

.tree li.child {
  padding-left: 40px;
  background:
    var(--v) 12px 0 / 1px 100% no-repeat,
    var(--v) 31px 0 / 1px 100% no-repeat,
    var(--h) 31px 8px / 10px 1px no-repeat;
}

.tree li.last {
  background:
    var(--v) 12px 0 / 1px 100% no-repeat,
    var(--v) 31px 0 / 1px 8px no-repeat,
    var(--h) 31px 8px / 10px 1px no-repeat;
}

.tree a {
  display: flex;
  align-items: center;
  gap: 4px;
  height: 16px;
  padding-left: 3px;
  white-space: nowrap;
}

.tree .group a {
  padding-left: 7px;
}

.tree .toggle {
  width: 12px;
  height: 12px;
  background: #fff;
}

.tree .selected a {
  background: #d4d4d4;
}

.tree .badge {
  width: 14px;
  height: 14px;
}

.tree .new {
  padding: 0 2px;
  font-size: 10px;
  background: #ffe020;
}

.vscroll,
.hscroll {
  display: flex;
  align-items: center;
  background: #f0f0f0;
}

.vscroll {
  flex-direction: column;
  padding: 6px 0;
}

.vtrack {
  display: flex;
  flex-direction: column;
  justify-content: flex-end;
  flex: 1;
  width: 100%;
  padding-bottom: 10px;
}

.vthumb {
  height: 48%;
  background: #cdcdcd;
}

.hscroll {
  padding: 0 5px;
}

.htrack {
  flex: 1;
  height: 15px;
  padding: 0 7px;
}

.hthumb {
  height: 100%;
  background: #cdcdcd;
}

.main {
  display: flex;
  flex-direction: column;
  flex: 1;
  min-width: 0;
}

.bars {
  display: flex;
  flex: none;
  height: 24px;
  margin-bottom: 4px;
  padding-left: 1px;
}

.bars.tall {
  height: 26px;
  margin-bottom: 2px;
}

.bar-axis {
  margin-left: 76px;
}

.bar-stub {
  width: 32px;
  margin-left: auto;
}

.viewport {
  flex: 1;
  min-height: 0;
  margin-right: 1px;
  background: #000;
}

.viewport svg {
  display: block;
  width: 100%;
  height: 100%;
}

.axis-no,
.dim-no {
  font: 14px Roboto, sans-serif;
  fill: #ddd;
}

.axis-no {
  text-anchor: middle;
}

.bars.snap-row {
  gap: 4px;
  height: 26px;
  margin: 2px 0 5px;
}

.bar-snap {
  padding-right: 1px;
}

.off {
  padding: 0 2px;
  color: #777;
  font-size: 13px;
}

.spin {
  display: flex;
  align-items: center;
  width: 58px;
  height: 23px;
  padding-right: 4px;
  border: 1px solid #777;
  background: #f4f4f4;
}

.spin input {
  width: 100%;
  min-width: 0;
  padding-right: 10px;
  color: #888;
  text-align: right;
}

.spin-rot {
  width: 68px;
  margin-left: 2px;
}

.rot {
  display: flex;
  align-items: center;
  gap: 8px;
}

.rot input {
  width: 12px;
  height: 12px;
  appearance: none;
  border: 1px solid #999;
}

/* Status bar */
.status {
  display: flex;
  gap: 2px;
  height: 20px;
  background: #f0f0f0;
}

.status span {
  padding-left: 1px;
  line-height: 18px;
  border: 1px solid #d4d4d4;
  border-left-color: #e4e4e4;
  background: #fafafa;
  white-space: nowrap;
}

.status .mono {
  font-family: "Liberation Mono", monospace;
  font-size: 10px;
  line-height: 20px;
}

.s-pos {
  flex: 0 0 148px;
}

.s-h {
  flex: 0 0 78px;
}

.s-base {
  flex: 0 0 98px;
}

.s-sel {
  flex: 0 0 48px;
}

.s-msg {
  flex: 1;
}

.s-fps {
  flex: 0 0 70px;
}

/* Taskbar */
.taskbar {
  display: flex;
  align-items: center;
  height: 40px;
  color: #fff;
  background: #000a0c;
}

.taskbar button {
  display: grid;
  place-items: center;
  height: 40px;
}

.start {
  width: 48px;
  background: #000;
}

.search {
  display: flex;
  align-items: center;
  gap: 5px;
  width: 344px;
  height: 40px;
  padding: 0 14px 0 9px;
  background: #333;
}

.search input {
  flex: 1;
  font-size: 14px;
}

.search input::placeholder {
  color: #999;
}

.tv {
  width: 49px;
}

.apps {
  display: flex;
}

.apps button {
  width: 42px;
}

.apps .wide-app {
  width: 52px;
}

.apps svg {
  width: 24px;
  height: 24px;
}

.apps .alert {
  width: 28px;
  height: 28px;
}

.apps .run {
  background: linear-gradient(#76b9ed, #76b9ed) center bottom / 33px 2px no-repeat;
}

.apps .active {
  background: linear-gradient(#76b9ed, #76b9ed) center bottom / 42px 2px no-repeat #343f42;
}

.link {
  margin-left: 14px;
}

.cpu,
.clock {
  line-height: 18px;
  text-align: center;
}

.cpu {
  margin-left: 21px;
}

.tray {
  display: flex;
  align-items: center;
  gap: 9px;
  margin-left: auto;
}

.clock {
  width: 54px;
  margin-left: 20px;
}

.notice {
  width: 62px;
  background: #000;
}
```
FILE: script.js
```
const nodes = [
  ['beam', '梁(L)'], ['ring', '圈梁(E)', 'last'],
  ['open', '板', 'group'],
  ['slab', '现浇板(B)'], ['spiral', '螺旋板(B)'], ['cap', '柱帽(V)'], ['hole', '板洞(N)'],
  ['force', '板受力筋(S)'], ['neg', '板负筋(F)'], ['band', '楼层板带(H)', 'last'],
  ['open', '基础', 'group'],
  ['fbeam', '基础梁(F)'], ['raft', '筏板基础(M)'], ['pit', '集水坑(K)'], ['pier', '柱墩(Y)'],
  ['force', '筏板主筋(R)'], ['neg', '筏板负筋(X)'], ['pad', '独立基础(P)'], ['strip', '条形基础(T)'],
  ['pile-cap', '桩承台(V)'], ['fbeam', '承台梁(F)'], ['pile', '桩(U)'], ['band', '基础板带(W)', 'last'],
  ['closed', '其它', 'group'],
  ['open', '自定义', 'group'],
  ['point', '自定义点'], ['line', '自定义线(X)', 'selected'], ['area', '自定义面'], ['dim', '尺寸标注(W)', 'last'],
  ['closed', 'CAD识别', 'group new-item']
];

const badge = '<svg class="badge"><use href="#t-doc"/></svg>';

document.getElementById('tree').innerHTML = nodes.map(([icon, label, state = '']) => {
  const isGroup = state.startsWith('group');
  const arrow = icon === 'open' ? 'M1 4l4 4 4-4' : 'M4 2l4 4-4 4';
  const toggle = isGroup
    ? `<svg class="toggle"><path d="${arrow}" fill="none" stroke="${icon === 'open' ? '#404040' : '#a0a0a0'}" stroke-width="2"/></svg>`
    : '';
  let extra = state === 'selected' ? badge : '';
  if (state.includes('new-item')) extra = badge + '<span class="new">NEW</span>';
  return `<li class="${isGroup ? '' : 'child '}${state}"><a href="#">${toggle}<svg class="ic"><use href="#t-${icon}"/></svg>${label}${extra}</a></li>`;
}).join('');
```
